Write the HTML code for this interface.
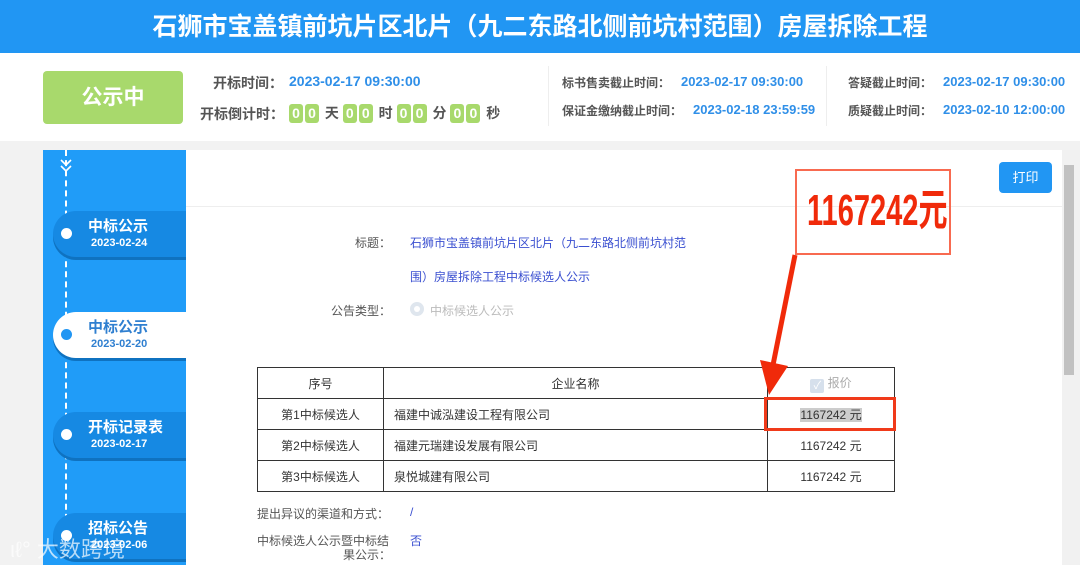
<!DOCTYPE html>
<html><head><meta charset="utf-8"><style>
*{margin:0;padding:0;box-sizing:border-box}
body{width:1080px;height:565px;overflow:hidden;background:#f2f2f2;font-family:"Liberation Sans","Noto Sans CJK SC",sans-serif;position:relative}
.a{position:absolute;white-space:nowrap}
.top{left:0;top:0;width:1080px;height:53px;background:#2196f3;color:#fff;font-size:25px;font-weight:bold;text-align:center;line-height:55px}
.hdr{left:0;top:53px;width:1080px;height:88px;background:#fff}
.lab{color:#555;font-size:14px;font-weight:bold}
.val{color:#2f8fe8;font-size:14px;font-weight:bold}
.d{display:inline-block;width:14px;height:19px;background:#a8d96c;color:#fff;border-radius:3px;text-align:center;line-height:19px;font-size:14px;font-weight:bold;margin-right:2px}
.tab{left:53px;width:133px;height:46px;background:#1689e3;border-radius:23px 0 0 23px;color:#fff;box-shadow:0 3px 0 #0f72c0}
.tab .t{position:absolute;left:35px;top:4px;font-size:15px;font-weight:bold}
.tab .dt{position:absolute;left:38px;top:26px;font-size:11px;font-weight:bold}
.tab .dot{position:absolute;left:8px;top:17px;width:11px;height:11px;border-radius:50%;background:#fff}
.tab.w{background:#fff;color:#2f7fd0}
.tab.w .dot{background:#2196f3}
table{border-collapse:collapse;font-size:12px;color:#333}
td{border:1px solid #333;height:31px;text-align:center}
.g{color:#555;font-size:12px}
.b{color:#3a4fd0;font-size:12px}
</style></head><body>
<div class="a top">石狮市宝盖镇前坑片区北片（九二东路北侧前坑村范围）房屋拆除工程</div>
<div class="a hdr"></div>
<div class="a" style="left:43px;top:71px;width:140px;height:53px;background:#a8d96c;border-radius:4px;color:#fff;font-size:21px;font-weight:bold;text-align:center;line-height:53px">公示中</div>
<div class="a lab" style="left:213px;top:73px">开标时间：</div>
<div class="a val" style="left:289px;top:73px">2023-02-17 09:30:00</div>
<div class="a lab" style="left:200px;top:104px">开标倒计时：</div>
<div class="a lab" style="left:289px;top:103px;color:#555"><span class="d">0</span><span class="d">0</span> 天 <span class="d">0</span><span class="d">0</span> 时 <span class="d">0</span><span class="d">0</span> 分 <span class="d">0</span><span class="d">0</span> 秒</div>
<div class="a" style="left:548px;top:66px;width:1px;height:60px;background:#eee"></div>
<div class="a" style="left:826px;top:66px;width:1px;height:60px;background:#eee"></div>
<div class="a lab" style="left:562px;top:74px;font-size:12px">标书售卖截止时间：</div>
<div class="a val" style="left:681px;top:74px;font-size:13px">2023-02-17 09:30:00</div>
<div class="a lab" style="left:562px;top:102px;font-size:12px">保证金缴纳截止时间：</div>
<div class="a val" style="left:693px;top:102px;font-size:13px">2023-02-18 23:59:59</div>
<div class="a lab" style="left:848px;top:74px;font-size:12px">答疑截止时间：</div>
<div class="a val" style="left:943px;top:74px;font-size:13px">2023-02-17 09:30:00</div>
<div class="a lab" style="left:848px;top:102px;font-size:12px">质疑截止时间：</div>
<div class="a val" style="left:943px;top:102px;font-size:13px">2023-02-10 12:00:00</div>

<div class="a" style="left:43px;top:150px;width:143px;height:415px;background:#209cf8"></div>
<div class="a" style="left:65px;top:150px;width:0;height:380px;border-left:2px dashed #fff"></div>
<svg class="a" style="left:60px;top:158px" width="12" height="16"><path d="M1 2l5 5 5-5M1 8l5 5 5-5" stroke="#fff" stroke-width="1.6" fill="none"/></svg>
<div class="a tab" style="top:211px"><div class="dot"></div><div class="t">中标公示</div><div class="dt">2023-02-24</div></div>
<div class="a tab w" style="top:312px"><div class="dot"></div><div class="t">中标公示</div><div class="dt">2023-02-20</div></div>
<div class="a tab" style="top:412px"><div class="dot"></div><div class="t">开标记录表</div><div class="dt">2023-02-17</div></div>
<div class="a tab" style="top:513px"><div class="dot"></div><div class="t">招标公告</div><div class="dt">2023-02-06</div></div>

<div class="a" style="left:186px;top:150px;width:876px;height:415px;background:#fff"></div>
<div class="a" style="left:186px;top:206px;width:876px;height:1px;background:#eee"></div>
<div class="a" style="left:1062px;top:150px;width:18px;height:415px;background:#f1f1f1"></div>
<div class="a" style="left:1064px;top:165px;width:10px;height:210px;background:#c1c1c1"></div>
<div class="a" style="left:999px;top:162px;width:53px;height:31px;background:#2196f3;border-radius:4px;color:#fff;font-size:13px;text-align:center;line-height:31px">打印</div>

<div class="a g" style="left:355px;top:234px">标题：</div>
<div class="a b" style="left:410px;top:234px">石狮市宝盖镇前坑片区北片（九二东路北侧前坑村范</div>
<div class="a b" style="left:410px;top:268px">围）房屋拆除工程中标候选人公示</div>
<div class="a g" style="left:331px;top:302px">公告类型：</div>
<div class="a" style="left:410px;top:302px;width:14px;height:14px;border-radius:50%;background:#dfe6ee;border:4px solid #dfe6ee"><div style="width:6px;height:6px;background:#fff;border-radius:50%"></div></div>
<div class="a" style="left:430px;top:302px;color:#bbb;font-size:12px">中标候选人公示</div>

<table class="a" style="left:257px;top:367px;width:638px">
<tr><td style="width:126px">序号</td><td style="width:384px">企业名称</td><td style="color:#aaa"><span style="display:inline-block;width:14px;height:14px;background:#d6e0ec;border-radius:2px;color:#fff;font-size:11px;line-height:14px;vertical-align:-2px">✓</span> 报价</td></tr>
<tr><td>第1中标候选人</td><td style="text-align:left;padding-left:10px">福建中诚泓建设工程有限公司</td><td><span style="background:#ccc">1167242 元</span></td></tr>
<tr><td>第2中标候选人</td><td style="text-align:left;padding-left:10px">福建元瑞建设发展有限公司</td><td>1167242 元</td></tr>
<tr><td>第3中标候选人</td><td style="text-align:left;padding-left:10px">泉悦城建有限公司</td><td>1167242 元</td></tr>
</table>
<div class="a" style="left:764px;top:397px;width:132px;height:34px;border:3px solid #f03a1a"></div>
<div class="a" style="left:795px;top:169px;width:156px;height:86px;border:2px solid #f86a50;overflow:hidden"></div>
<div class="a" style="left:873px;top:186px;width:0;height:50px"><span style="position:absolute;left:-100px;width:200px;text-align:center;color:#f02a0a;font-size:44px;font-weight:bold;line-height:50px;transform:scaleX(0.66);font-family:'Liberation Sans Narrow','Liberation Sans','Noto Sans CJK SC',sans-serif">1167242元</span></div>
<svg class="a" style="left:750px;top:250px" width="60" height="150"><line x1="45" y1="5" x2="22" y2="120" stroke="#f02a0a" stroke-width="5"/><polygon points="10,110 38,116 19,145" fill="#f02a0a"/></svg>

<div class="a g" style="left:257px;top:505px">提出异议的渠道和方式：</div>
<div class="a b" style="left:410px;top:505px">/</div>
<div class="a g" style="left:257px;top:532px">中标候选人公示暨中标结</div>
<div class="a g" style="left:343px;top:546px">果公示：</div>
<div class="a b" style="left:410px;top:532px">否</div>
<div class="a" style="left:10px;top:532px;color:rgba(255,255,255,0.7);font-size:22px">ιℓ° 大数跨境</div>
</body></html>
